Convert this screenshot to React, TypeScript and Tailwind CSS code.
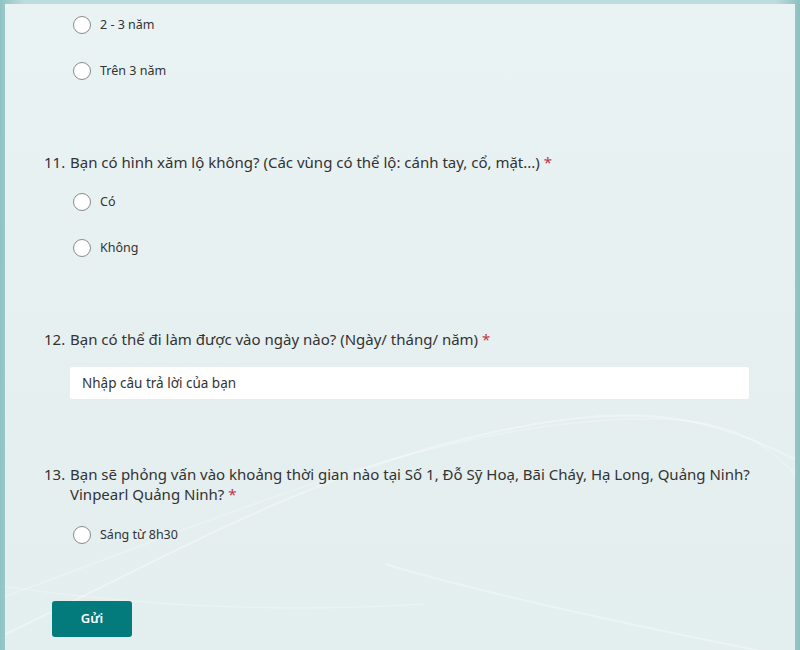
import React from "react";

const font = { fontFamily: '"Noto Sans", "Open Sans", sans-serif' };

function Radio({ label }: { label: string }) {
  return (
    <label className="flex items-center gap-[9px] h-[20px] cursor-pointer">
      <span className="w-[18px] h-[18px] rounded-full border-[1.5px] border-[#8a8a8a] bg-white shrink-0" />
      <span className="text-[12.5px] text-[#333]">{label}</span>
    </label>
  );
}

function Question({ num, children }: { num: string; children: React.ReactNode }) {
  return (
    <div className="flex text-[15px] leading-[20px] text-[#333]">
      <span className="w-[26px] shrink-0">{num}</span>
      <span className="w-[700px]">
        {children} <span className="text-[#c4314b]">*</span>
      </span>
    </div>
  );
}

export default function App() {
  return (
    <div
      className="w-[800px] h-[650px] overflow-hidden bg-[linear-gradient(90deg,#8fc3c3_0%,#bcdcdd_3%,#bcdcdd_97%,#8cc0c1_100%)] pt-[4px] px-[5px]"
      style={font}
    >
      <div className="relative h-[700px] bg-[linear-gradient(180deg,#eaf3f4_0%,#e5eff0_60%,#e3eeef_100%)] overflow-hidden">
        {/* wave decoration */}
        <svg className="absolute inset-0 w-full h-full pointer-events-none" viewBox="0 0 790 700" fill="none">
          <path d="M-20 640 C 150 560, 300 470, 480 430 S 720 420, 820 470" stroke="#ffffff" strokeOpacity="0.35" strokeWidth="2" />
          <path d="M-20 600 C 200 520, 380 440, 560 420 S 760 440, 820 500" stroke="#ffffff" strokeOpacity="0.25" strokeWidth="1.5" />
          <path d="M380 560 C 480 590, 620 620, 820 660" stroke="#ffffff" strokeOpacity="0.3" strokeWidth="2" />
          <path d="M-20 580 C 120 600, 250 610, 420 600" stroke="#ffffff" strokeOpacity="0.25" strokeWidth="1.5" />
        </svg>

        <div className="relative pl-[39px]">
          {/* previous question options */}
          <div className="pl-[29px] pt-[11px] flex flex-col gap-[26px]">
            <Radio label="2 - 3 năm" />
            <Radio label="Trên 3 năm" />
          </div>

          {/* Q11 */}
          <div className="mt-[71px]">
            <Question num="11.">
              Bạn có hình xăm lộ không? (Các vùng có thể lộ: cánh tay, cổ, mặt...)
            </Question>
            <div className="pl-[29px] mt-[20px] flex flex-col gap-[26px]">
              <Radio label="Có" />
              <Radio label="Không" />
            </div>
          </div>

          {/* Q12 */}
          <div className="mt-[71px]">
            <Question num="12.">Bạn có thể đi làm được vào ngày nào? (Ngày/ tháng/ năm)</Question>
            <div className="pl-[26px] mt-[18px]">
              <div className="w-[679px] h-[32px] bg-white rounded-[2px] flex items-center px-[12px] text-[13.5px] text-[#333]">
                Nhập câu trả lời của bạn
              </div>
            </div>
          </div>

          {/* Q13 */}
          <div className="mt-[65px]">
            <Question num="13.">
              Bạn sẽ phỏng vấn vào khoảng thời gian nào tại Số 1, Đỗ Sỹ Hoạ, Bãi Cháy, Hạ Long, Quảng Ninh?
              <br />
              Vinpearl Quảng Ninh?
            </Question>
            <div className="pl-[29px] mt-[21px] flex flex-col gap-[26px]">
              <Radio label="Sáng từ 8h30" />
            </div>
          </div>

          {/* submit */}
          <div className="mt-[56px] pl-[8px]">
            <button className="w-[80px] h-[36px] bg-[#037a7c] rounded-[3px] text-white text-[13px] font-semibold">
              Gửi
            </button>
          </div>
        </div>
      </div>
    </div>
  );
}
